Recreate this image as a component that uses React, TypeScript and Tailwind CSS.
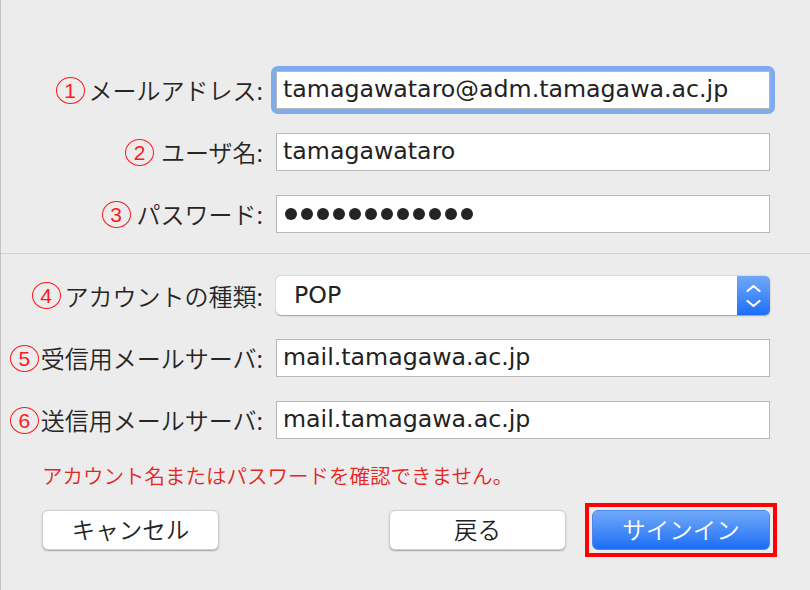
import React from "react";

const JP = "font-['Noto_Sans_CJK_JP',sans-serif] font-[350]";
const LAT = "font-['DejaVu_Sans','Noto_Sans_CJK_JP',sans-serif]";

function Num({ n }: { n: string }) {
  return (
    <span className="inline-flex w-[29px] h-[27px] items-center justify-center rounded-[50%] border-[1.5px] border-[#ff1a1a] text-[#ff1a1a] text-[21px] leading-none font-['Liberation_Sans',sans-serif] font-normal shrink-0">
      {n}
    </span>
  );
}

function Label({ n, text, gap }: { n: string; text: string; gap: string }) {
  return (
    <div className={`w-[262px] flex items-center justify-end ${JP} text-[24px] text-[#262626] leading-none`}>
      <Num n={n} />
      <span className={gap}>{text}</span>
    </div>
  );
}

function Field({ value, focus }: { value: string; focus?: boolean }) {
  const box = (
    <div
      className={`w-[494px] h-[38px] bg-white border border-[#b8b8b8] flex items-center pl-[6px] ${LAT} text-[23.7px] text-[#222] leading-none`}
    >
      {value}
    </div>
  );
  if (focus)
    return (
      <div className="-m-[5px] p-[5px] rounded-[7px] bg-[#7fabef]">{box}</div>
    );
  return box;
}

export default function App() {
  return (
    <div className="w-[810px] h-[590px] bg-[#ececec] border-l border-[#c2c2c2] flex flex-col">
      <div className="flex flex-col gap-[24px] pt-[71px]">
        <div className="flex items-center gap-[13px]">
          <Label n="1" text="メールアドレス:" gap="ml-[4px]" />
          <Field value="tamagawataro@adm.tamagawa.ac.jp" focus />
        </div>
        <div className="flex items-center gap-[13px]">
          <Label n="2" text="ユーザ名:" gap="ml-[7px]" />
          <Field value="tamagawataro" />
        </div>
        <div className="flex items-center gap-[13px]">
          <Label n="3" text="パスワード:" gap="ml-[6px]" />
          <div className="w-[494px] h-[38px] bg-white border border-[#b8b8b8] flex items-center pl-[8px] gap-[4px]">
            {Array.from({ length: 12 }).map((_, i) => (
              <span key={i} className="w-[12px] h-[12px] rounded-full bg-[#232323]" />
            ))}
          </div>
        </div>
      </div>

      <div className="mt-[20px] h-px bg-[#d4d4d4]" />

      <div className="flex flex-col gap-[24px] mt-[22px]">
        <div className="flex items-center gap-[13px]">
          <Label n="4" text="アカウントの種類:" gap="ml-[4px]" />
          <div className="w-[494px] h-[39px] flex rounded-[5px] bg-white shadow-[0_0.5px_1.5px_rgba(0,0,0,0.35)]">
            <div className={`flex-1 flex items-center pl-[18px] ${LAT} text-[23.7px] text-[#222] leading-none`}>
              POP
            </div>
            <div className="w-[33px] rounded-r-[5px] bg-gradient-to-b from-[#6fa8f8] to-[#1a6ef6] flex flex-col items-center justify-center gap-[8px]">
              <svg width="15" height="7" viewBox="0 0 15 7">
                <path d="M1.5 6 L7.5 1 L13.5 6" fill="none" stroke="white" strokeWidth="2.2" strokeLinecap="round" strokeLinejoin="round" />
              </svg>
              <svg width="15" height="7" viewBox="0 0 15 7">
                <path d="M1.5 1 L7.5 6 L13.5 1" fill="none" stroke="white" strokeWidth="2.2" strokeLinecap="round" strokeLinejoin="round" />
              </svg>
            </div>
          </div>
        </div>
        <div className="flex items-center gap-[13px]">
          <Label n="5" text="受信用メールサーバ:" gap="ml-[2px]" />
          <Field value="mail.tamagawa.ac.jp" />
        </div>
        <div className="flex items-center gap-[13px]">
          <Label n="6" text="送信用メールサーバ:" gap="ml-[2px]" />
          <Field value="mail.tamagawa.ac.jp" />
        </div>
      </div>

      <div className={`mt-[24px] pl-[41px] ${JP} text-[20.5px] leading-[24px] text-[#e3261e]`}>
        アカウント名またはパスワードを確認できません。
      </div>

      <div className={`mt-[16px] flex items-center pl-[41px] ${JP}`}>
        <button className="w-[177px] h-[40px] rounded-[6px] bg-white border border-[#cfcfcf] shadow-[0_1px_1.5px_rgba(0,0,0,0.3)] text-[23.5px] text-[#222] leading-none">
          キャンセル
        </button>
        <button className="ml-[170px] w-[177px] h-[40px] rounded-[6px] bg-white border border-[#cfcfcf] shadow-[0_1px_1.5px_rgba(0,0,0,0.3)] text-[23.5px] text-[#222] leading-none">
          戻る
        </button>
        <div className="ml-[19px] border-[4px] border-[#ff0000] p-[3px]">
          <button className="w-[178px] h-[40px] rounded-[6px] bg-gradient-to-b from-[#70a9f8] to-[#196cf5] border border-[#4c88e8] text-[23.5px] text-white leading-none">
            サインイン
          </button>
        </div>
      </div>
    </div>
  );
}
